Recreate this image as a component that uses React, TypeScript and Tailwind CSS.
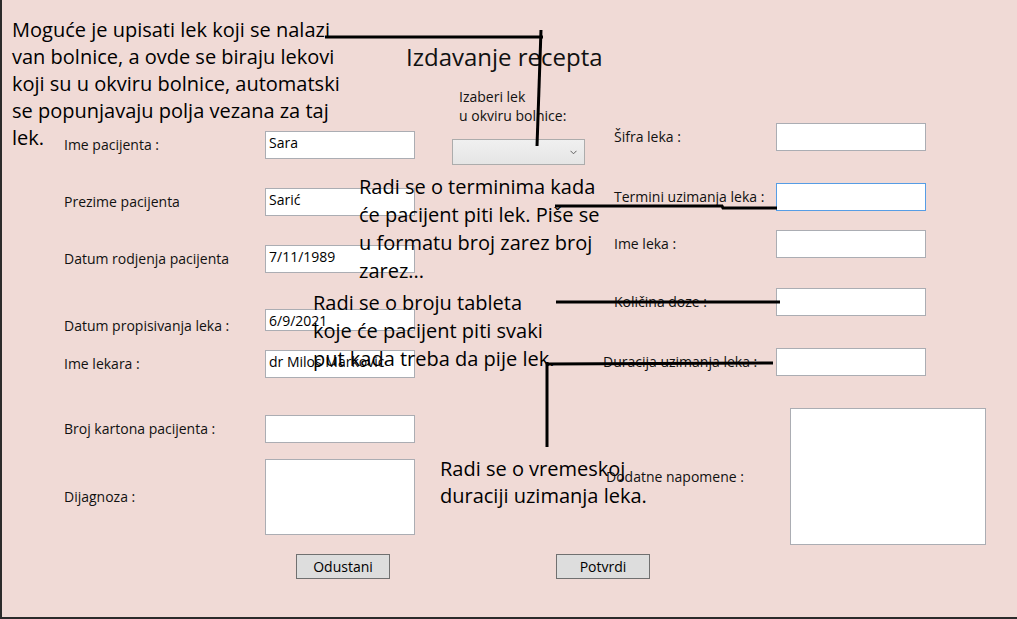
import React from "react";

const leftRows = [
  { label: "Ime pacijenta :", value: "Sara", mt: "mt-0", h: "h-[28px]" },
  { label: "Prezime pacijenta", value: "Sarić", mt: "mt-[29px]", h: "h-[28px]" },
  { label: "Datum rodjenja pacijenta", value: "7/11/1989", mt: "mt-[29px]", h: "h-[28px]" },
  { label: "Datum propisivanja leka :", value: "6/9/2021", mt: "mt-[36px]", h: "h-[22px]", low: true },
  { label: "Ime lekara :", value: "dr Milos Markovic", mt: "mt-[19px]", h: "h-[28px]" },
  { label: "Broj kartona pacijenta :", value: "", mt: "mt-[37px]", h: "h-[28px]" },
  { label: "Dijagnoza :", value: "", mt: "mt-[16px]", h: "h-[76px]" },
];

const rightRows = [
  { label: "Šifra leka :", mt: "mt-0", pl: "pl-[11px]" },
  { label: "Termini uzimanja leka :", mt: "mt-[32px]", pl: "pl-[11px]", focused: true },
  { label: "Ime leka :", mt: "mt-[19px]", pl: "pl-[11px]" },
  { label: "Količina doze :", mt: "mt-[30px]", pl: "pl-[11px]" },
  { label: "Duracija uzimanja leka :", mt: "mt-[32px]", pl: "pl-0" },
];

function TextBox({ value, h, focused }: { value?: string; h: string; focused?: boolean }) {
  return (
    <div
      className={`w-[150px] ${h} shrink-0 bg-white border ${
        focused ? "border-[#569de5]" : "border-[#abadb3]"
      } px-[3px] pt-[2px] text-[14px] leading-[18px] text-black whitespace-nowrap overflow-hidden`}
    >
      {value}
    </div>
  );
}

function Note({ className, lines }: { className: string; lines: string[] }) {
  return (
    <div className={`absolute text-[20px] leading-[27px] text-black whitespace-nowrap ${className}`}>
      {lines.map((l, i) => (
        <div key={i}>{l}</div>
      ))}
    </div>
  );
}

export default function App() {
  return (
    <div className="relative w-[1017px] h-[619px] overflow-hidden bg-[#f0dad6] shadow-[inset_2px_-2px_0_#2b2b2b] font-['Open_Sans',sans-serif] text-[#111]">
      <div className="flex">
        {/* left column */}
        <div className="ml-[64px] w-[342px] shrink-0 pt-[131px] flex flex-col">
          {leftRows.map((r) => (
            <div key={r.label} className={`flex items-center ${r.mt}`}>
              <div
                className={`w-[201px] shrink-0 text-[14px] leading-[18px] whitespace-nowrap ${
                  r.low ? "translate-y-[6px]" : ""
                }`}
              >
                {r.label}
              </div>
              <TextBox value={r.value} h={r.h} />
            </div>
          ))}
          <button className="mt-[19px] ml-[232px] w-[94px] h-[25px] bg-[#dddddd] border border-[#707070] text-[14px] leading-[18px] text-black">
            Odustani
          </button>
        </div>

        {/* center column */}
        <div className="w-[197px] shrink-0 pt-[41px] flex flex-col">
          <div className="text-[24px] leading-[32px] whitespace-nowrap">Izdavanje recepta</div>
          <div className="mt-[14px] ml-[53px] text-[14px] leading-[19px] whitespace-nowrap">
            <div>Izaberi lek</div>
            <div>u okviru bolnice:</div>
          </div>
          <div className="mt-[14px] ml-[46px] w-[133px] h-[26px] border border-[#acacac] bg-gradient-to-b from-[#f0f0f0] to-[#e5e5e5] flex items-center justify-end pr-[7px]">
            <svg width="7" height="5" viewBox="0 0 7 5">
              <path d="M0.5 0.8 L3.5 3.8 L6.5 0.8" fill="none" stroke="#606060" strokeWidth="1" />
            </svg>
          </div>
          <button className="mt-[389px] ml-[150px] w-[94px] h-[25px] bg-[#dddddd] border border-[#707070] text-[14px] leading-[18px] text-black">
            Potvrdi
          </button>
        </div>

        {/* right column */}
        <div className="flex-1 pt-[123px] flex flex-col">
          {rightRows.map((r) => (
            <div key={r.label} className={`flex items-center ${r.mt}`}>
              <div className={`w-[173px] shrink-0 ${r.pl} text-[14px] leading-[18px] whitespace-nowrap`}>{r.label}</div>
              <TextBox h="h-[28px]" focused={r.focused} />
            </div>
          ))}
          <div className="flex items-center mt-[32px]">
            <div className="w-[187px] shrink-0 pl-[3px] text-[14px] leading-[18px] whitespace-nowrap">Dodatne napomene :</div>
            <div className="w-[196px] h-[137px] bg-white border border-[#abadb3]" />
          </div>
        </div>
      </div>

      {/* annotations */}
      <Note
        className="left-[12px] top-[16px]"
        lines={[
          "Moguće je upisati lek koji se nalazi",
          "van bolnice, a ovde se biraju lekovi",
          "koji su u okviru bolnice, automatski",
          "se popunjavaju polja vezana za taj",
          "lek.",
        ]}
      />
      <Note
        className="left-[359px] top-[173px] leading-[28px]"
        lines={["Radi se o terminima kada", "će pacijent piti lek. Piše se", "u formatu broj zarez broj", "zarez..."]}
      />
      <Note
        className="left-[313px] top-[289px] leading-[28px]"
        lines={["Radi se o broju tableta", "koje će pacijent piti svaki", "put kada treba da pije lek."]}
      />
      <Note className="left-[440px] top-[455px]" lines={["Radi se o vremeskoj", "duraciji uzimanja leka."]} />

      <svg className="absolute inset-0 pointer-events-none" width="1017" height="619">
        <g fill="none" stroke="#000" strokeWidth="3">
          <path d="M325 37 L543 37" />
          <path d="M541 30 L537 146" />
          <path d="M555 206 L722 206 L723 208 L777 208" />
          <path d="M556 302 L780 302" />
          <path d="M547 364 L773 363" />
          <path d="M547 362 L547 447" />
        </g>
      </svg>
    </div>
  );
}
